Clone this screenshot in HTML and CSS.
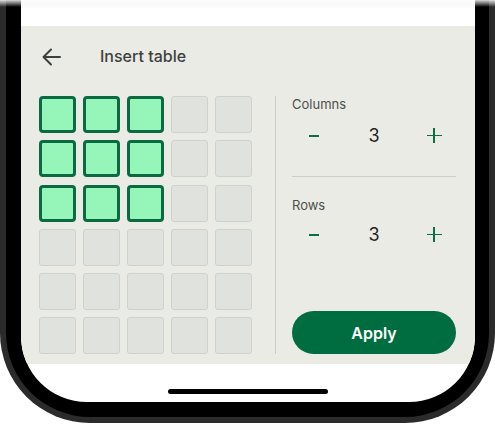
FILE: index.html
```html
<!DOCTYPE html>
<html>
<head>
<meta charset="utf-8">
<link rel="stylesheet" href="styles.css">
</head>
<body>
<div class="phone">
  <div class="bezel">
    <div class="screen">
      <div class="status"></div>
      <div class="panel">
        <div class="header">
          <svg class="back" width="20" height="18" viewBox="0 0 20 18"><path d="M19 9H2.5M10 1.5L2.5 9L10 16.5" fill="none" stroke="#3d413d" stroke-width="2" stroke-linecap="round" stroke-linejoin="round"/></svg>
          <span class="title">Insert table</span>
        </div>
        <div class="body">
          <div class="grid">
            <div class="cell on"></div><div class="cell on"></div><div class="cell on"></div><div class="cell"></div><div class="cell"></div>
            <div class="cell on"></div><div class="cell on"></div><div class="cell on"></div><div class="cell"></div><div class="cell"></div>
            <div class="cell on"></div><div class="cell on"></div><div class="cell on"></div><div class="cell"></div><div class="cell"></div>
            <div class="cell"></div><div class="cell"></div><div class="cell"></div><div class="cell"></div><div class="cell"></div>
            <div class="cell"></div><div class="cell"></div><div class="cell"></div><div class="cell"></div><div class="cell"></div>
            <div class="cell"></div><div class="cell"></div><div class="cell"></div><div class="cell"></div><div class="cell"></div>
          </div>
          <div class="vline"></div>
          <div class="side">
            <div class="label">Columns</div>
            <div class="stepper">
              <span class="btn minus"></span>
              <span class="num">3</span>
              <span class="btn plus"></span>
            </div>
            <div class="hline"></div>
            <div class="label">Rows</div>
            <div class="stepper second">
              <span class="btn minus"></span>
              <span class="num">3</span>
              <span class="btn plus"></span>
            </div>
            <div class="apply">Apply</div>
          </div>
        </div>
      </div>
      <div class="bottom"><div class="home"></div></div>
    </div>
  </div>
  <div class="fade"></div>
</div>
</body>
</html>
```
FILE: styles.css
```css
html, body {
  margin: 0;
  padding: 0;
  background: #ffffff;
}
body {
  width: 495px;
  height: 425px;
  overflow: hidden;
  font-family: Inter, Roboto, "Liberation Sans", sans-serif;
}
.phone {
  position: relative;
  width: 495px;
  height: 423px;
  box-sizing: border-box;
  background: #2b2b2b;
  border-radius: 0 0 90px 90px;
  padding: 0 6px 6px 6px;
}
.bezel {
  height: 417px;
  box-sizing: border-box;
  background: #000;
  border-radius: 0 0 84px 84px;
  padding: 0 14px 15px 15px;
}
.screen {
  height: 402px;
  background: #fff;
  border-radius: 0 0 66px 66px;
  overflow: hidden;
  display: flex;
  flex-direction: column;
}
.status {
  height: 26px;
  flex: none;
  background: linear-gradient(#f2f2f2 0px, #f6f6f6 4px, #ffffff 9px);
}
.panel {
  height: 338px;
  flex: none;
  background: #ebebe6;
  box-sizing: border-box;
  padding: 0 19px 0 18px;
}
.header {
  height: 60px;
  display: flex;
  align-items: center;
  padding-left: 2px;
}
.back {
  display: block;
  margin-top: 1px;
}
.title {
  margin-left: 39px;
  font-size: 16px;
  font-weight: 500;
  color: #3d413d;
}
.body {
  margin-top: 10px;
  display: flex;
  height: 258px;
}
.grid {
  display: grid;
  grid-template-columns: repeat(5, 37px);
  grid-auto-rows: 37px;
  column-gap: 7px;
  row-gap: 7.3px;
  width: 213px;
  flex: none;
}
.cell {
  box-sizing: border-box;
  border-radius: 3px;
  background: #e0e2dd;
  border: 1.5px solid #cdd2cb;
}
.cell.on {
  background: #96f5b8;
  border: 3px solid #0a6b42;
  border-radius: 4px;
}
.vline {
  width: 1px;
  background: #c9cec7;
  margin: 0 16px 0 23px;
  flex: none;
}
.side {
  width: 164px;
  display: flex;
  flex-direction: column;
}
.label {
  font-size: 13px;
  line-height: 16px;
  color: #4b504b;
}
.stepper {
  margin-top: 8px;
  height: 30px;
  display: grid;
  grid-template-columns: 44px 1fr 44px;
  align-items: center;
  justify-items: center;
}
.stepper.second {
  margin-top: 6px;
}
.num {
  font-size: 18px;
  color: #222522;
}
.btn {
  position: relative;
  width: 15px;
  height: 15px;
}
.btn::before, .plus::after {
  content: "";
  position: absolute;
  background: #0b6e43;
}
.minus::before {
  left: 2px;
  right: 3px;
  top: 7px;
  height: 2px;
}
.plus::before {
  left: 0;
  right: 0;
  top: 7px;
  height: 1.8px;
}
.plus::after {
  top: 0;
  bottom: 0;
  left: 6.6px;
  width: 1.8px;
}
.hline {
  height: 1px;
  background: #c9cec7;
  margin-top: 26px;
  margin-bottom: 20px;
}
.apply {
  margin-top: auto;
  height: 43px;
  border-radius: 22px;
  background: #006d40;
  color: #fff;
  font-size: 16px;
  font-weight: 600;
  display: flex;
  align-items: center;
  justify-content: center;
}
.bottom {
  flex: 1;
  display: flex;
  justify-content: center;
  padding-top: 25px;
}
.home {
  width: 160px;
  height: 5px;
  border-radius: 3px;
  background: #000;
}
.fade {
  position: absolute;
  left: 0;
  right: 0;
  top: 0;
  height: 7px;
  background: linear-gradient(rgba(255,255,255,0.85), rgba(255,255,255,0));
  pointer-events: none;
}
```
